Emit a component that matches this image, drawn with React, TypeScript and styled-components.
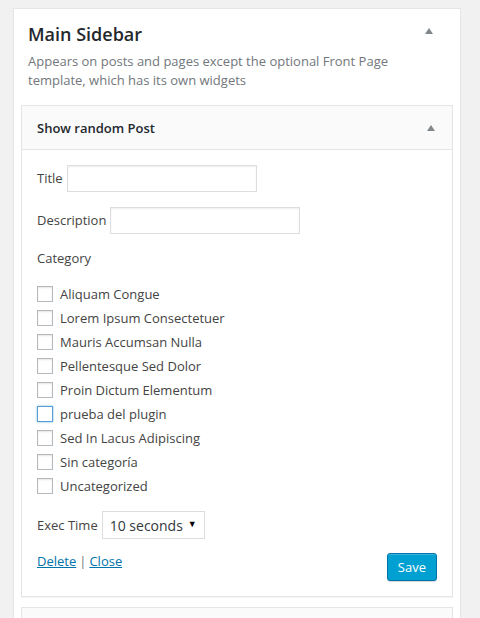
import React from "react";
import styled, { createGlobalStyle } from "styled-components";

const Global = createGlobalStyle`
  html, body { margin: 0; padding: 0; }
  body {
    background: #f1f1f1;
    font-family: "Open Sans", "Noto Sans", sans-serif;
    color: #444;
    font-size: 13px;
    -webkit-font-smoothing: antialiased;
  }
`;

const Page = styled.div`
  height: 618px;
  overflow: hidden;
  padding: 8px 0 0 13px;
  box-sizing: border-box;
`;

const Sidebar = styled.div`
  width: 448px;
  height: 620px;
  box-sizing: border-box;
  background: #fff;
  border: 1px solid #e5e5e5;
  display: flex;
  flex-direction: column;
  padding: 0 7px;
`;

const SidebarHead = styled.div`
  display: flex;
  align-items: flex-start;
  justify-content: space-between;
  padding: 13px 20px 0 7px;
`;

const SidebarTitle = styled.h2`
  margin: 0;
  font-size: 18px;
  font-weight: 600;
  color: #23282d;
  line-height: 24px;
`;

const Arrow = styled.span<{ $top: number }>`
  width: 0;
  height: 0;
  margin-top: ${(p) => p.$top}px;
  border-left: 4px solid transparent;
  border-right: 4px solid transparent;
  border-bottom: 6px solid #82878c;
`;

const SidebarDesc = styled.p`
  margin: 6px 0 0;
  padding: 0 14px 0 7px;
  font-size: 13px;
  line-height: 19px;
  color: #72777c;
`;

const Widget = styled.div`
  margin-top: 15px;
  border: 1px solid #e5e5e5;
  background: #fff;
  box-shadow: 0 1px 1px rgba(0, 0, 0, 0.04);
`;

const WidgetTop = styled.div<{ $open?: boolean }>`
  display: flex;
  align-items: center;
  justify-content: space-between;
  height: 43px;
  padding: 0 17px 0 15px;
  background: #fafafa;
  border-bottom: ${(p) => (p.$open ? "1px solid #e5e5e5" : "none")};
`;

const WidgetTitle = styled.h3`
  margin: 0;
  font-size: 13px;
  font-weight: 600;
  color: #23282d;
`;

const WidgetInside = styled.div`
  padding: 15px 15px 15px;
  display: flex;
  flex-direction: column;
`;

const FieldRow = styled.div<{ $mt?: number }>`
  display: flex;
  align-items: center;
  gap: 4px;
  margin-top: ${(p) => p.$mt ?? 0}px;
  color: #444;
  line-height: 19px;
`;

const TextInput = styled.input`
  width: 190px;
  height: 27px;
  box-sizing: border-box;
  border: 1px solid #ddd;
  box-shadow: inset 0 1px 2px rgba(0, 0, 0, 0.07);
  background: #fff;
  margin: 0;
  padding: 2px 4px;
  font: inherit;
`;

const Label = styled.div<{ $mt?: number }>`
  margin-top: ${(p) => p.$mt ?? 0}px;
  line-height: 19px;
  color: #444;
`;

const CheckList = styled.div`
  margin-top: 14px;
  display: flex;
  flex-direction: column;
`;

const CheckRow = styled.label`
  display: flex;
  align-items: center;
  height: 24px;
  gap: 7px;
  color: #444;
`;

const Box = styled.span<{ $focus?: boolean }>`
  width: 16px;
  height: 16px;
  box-sizing: border-box;
  border: 1px solid ${(p) => (p.$focus ? "#5b9dd9" : "#b4b9be")};
  box-shadow: ${(p) =>
    p.$focus ? "0 0 2px rgba(30,140,190,.6)" : "inset 0 1px 2px rgba(0,0,0,.1)"};
  background: #fff;
  flex: none;
`;

const SelectBox = styled.div`
  display: flex;
  align-items: center;
  justify-content: space-between;
  width: 103px;
  height: 28px;
  box-sizing: border-box;
  border: 1px solid #ddd;
  padding: 0 7px 0 7px;
  font-size: 14px;
  color: #32373c;
  background: #fff;
`;

const SelectArrow = styled.span`
  font-size: 9px;
  color: #000;
  margin-top: -3px;
`;

const Footer = styled.div`
  display: flex;
  justify-content: space-between;
  align-items: flex-start;
  margin-top: 13px;
`;

const Links = styled.div`
  display: flex;
  gap: 3px;
  line-height: 19px;
  color: #72777c;
`;

const Link = styled.a`
  color: #0073aa;
  text-decoration: underline;
  cursor: pointer;
`;

const SaveButton = styled.button`
  margin-top: 1px;
  height: 28px;
  padding: 0 10px 1px;
  border: 1px solid #0073aa;
  border-radius: 3px;
  background: #00a0d2;
  box-shadow: inset 0 1px 0 rgba(120, 200, 230, 0.5), 0 1px 0 rgba(0, 0, 0, 0.15);
  color: #fff;
  font: inherit;
  font-size: 13px;
  line-height: 26px;
`;

const NextWidget = styled.div`
  margin-top: 10px;
  height: 40px;
  border: 1px solid #e5e5e5;
  background: #fafafa;
`;

const categories = [
  "Aliquam Congue",
  "Lorem Ipsum Consectetuer",
  "Mauris Accumsan Nulla",
  "Pellentesque Sed Dolor",
  "Proin Dictum Elementum",
  "prueba del plugin",
  "Sed In Lacus Adipiscing",
  "Sin categoría",
  "Uncategorized",
];

export default function App() {
  return (
    <>
      <Global />
      <Page>
        <Sidebar>
          <SidebarHead>
            <SidebarTitle>Main Sidebar</SidebarTitle>
            <Arrow $top={6} />
          </SidebarHead>
          <SidebarDesc>
            Appears on posts and pages except the optional Front Page template, which has its own
            widgets
          </SidebarDesc>
          <Widget>
            <WidgetTop $open>
              <WidgetTitle>Show random Post</WidgetTitle>
              <Arrow $top={0} />
            </WidgetTop>
            <WidgetInside>
              <FieldRow>
                Title <TextInput />
              </FieldRow>
              <FieldRow $mt={15}>
                Description <TextInput />
              </FieldRow>
              <Label $mt={15}>Category</Label>
              <CheckList>
                {categories.map((c) => (
                  <CheckRow key={c}>
                    <Box $focus={c === "prueba del plugin"} />
                    {c}
                  </CheckRow>
                ))}
              </CheckList>
              <FieldRow $mt={13}>
                Exec Time
                <SelectBox>
                  <span>10 seconds</span>
                  <SelectArrow>▼</SelectArrow>
                </SelectBox>
              </FieldRow>
              <Footer>
                <Links>
                  <Link>Delete</Link>|<Link>Close</Link>
                </Links>
                <SaveButton>Save</SaveButton>
              </Footer>
            </WidgetInside>
          </Widget>
          <NextWidget />
        </Sidebar>
      </Page>
    </>
  );
}
